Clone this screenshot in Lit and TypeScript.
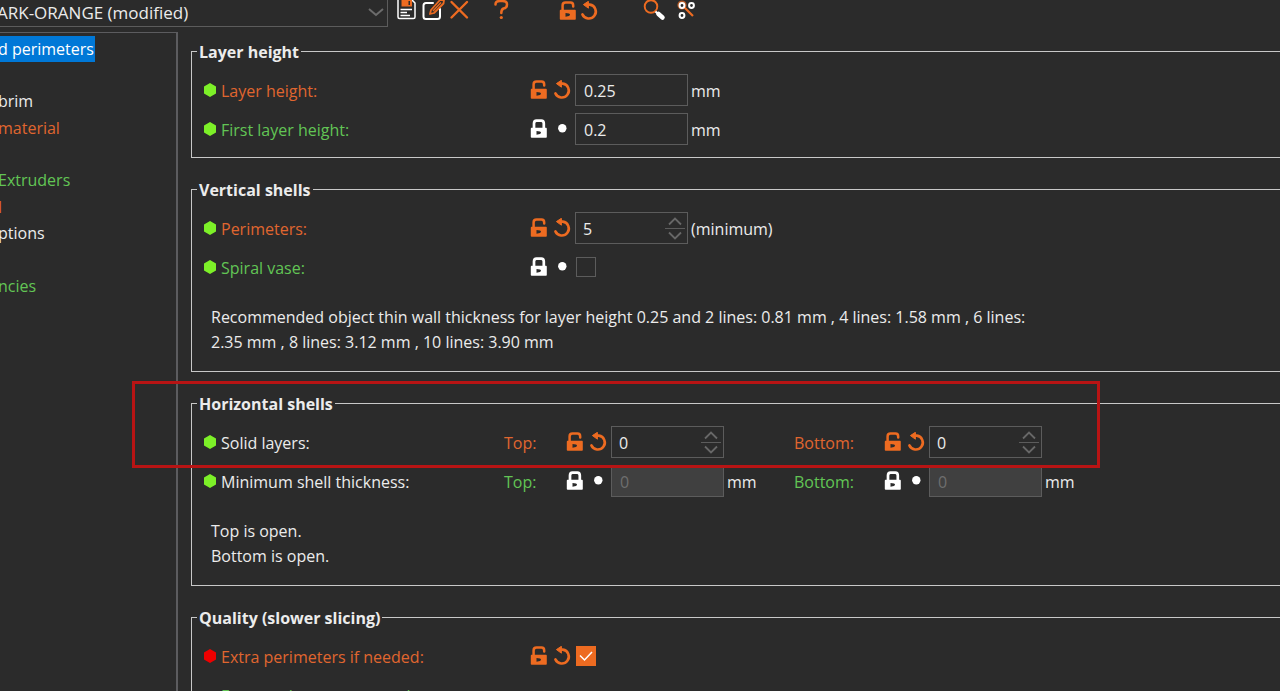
import { LitElement, html, css, nothing } from "lit";
import { customElement, property } from "lit/decorators.js";

type Tone = "plain" | "changed" | "system";

const shared = css`
  * {
    box-sizing: border-box;
  }
  svg {
    display: block;
    flex: none;
  }
  button {
    display: block;
    padding: 0;
    border: 0;
    background: none;
    color: inherit;
    cursor: pointer;
  }
  .plain {
    color: #ececec;
  }
  .changed {
    color: #e0662f;
  }
  .system {
    color: #62c555;
  }
`;

const unlocked = html`<svg width="20" height="20" viewBox="0 0 20 20">
  <path d="M4.600 10V4.500Q4.600 1.600 7.500 1.600H12.500Q15.200 1.600 15.200 4.500V5.500" fill="none" stroke="#ed6b21" stroke-width="2.500" stroke-linecap="round" />
  <path fill-rule="evenodd" fill="#ed6b21" d="M2.500 8.800H17Q17.800 8.800 17.800 9.700V18Q17.800 18.800 17 18.800H2.700Q1.800 18.800 1.800 18V9.700Q1.800 8.800 2.500 8.800ZM7.500 12L11 12.600Q13 13.800 11 15L7.500 15.700Z" />
</svg>`;

const locked = html`<svg width="20" height="20" viewBox="0 0 20 20">
  <path d="M5 10V4.500Q5 1.600 7.500 1.600H12.300Q14.800 1.600 14.800 4.500V10" fill="none" stroke="#fff" stroke-width="2.700" />
  <path fill-rule="evenodd" fill="#fff" d="M2.500 8.800H17Q17.800 8.800 17.800 9.700V18Q17.800 18.800 17 18.800H2.700Q1.800 18.800 1.800 18V9.700Q1.800 8.800 2.500 8.800ZM7.500 12L11 12.600Q13 13.800 11 15L7.500 15.700Z" />
</svg>`;

const undo = html`<svg width="20" height="20" viewBox="0 0 20 20">
  <path d="M7 3.600H9.800A7 7 0 1 1 2.400 13.400" fill="none" stroke="#ed6b21" stroke-width="2.600" stroke-linecap="round" />
  <path d="M3.400 3.600L8.400 0.300V7.200Z" fill="#ed6b21" stroke="#ed6b21" stroke-linejoin="round" />
</svg>`;

const dot = html`<svg width="20" height="20" viewBox="0 0 20 20"><circle cx="9.300" cy="9.300" r="4.200" fill="#fff" /></svg>`;

@customElement("option-field")
class OptionField extends LitElement {
  @property() kind: "text" | "spin" | "check" = "text";
  @property() value = "";
  @property() unit = "";
  @property() name = "";
  @property({ type: Boolean }) modified = false;
  @property({ type: Boolean }) disabled = false;
  @property({ type: Boolean }) checked = false;

  static styles = [
    shared,
    css`
      :host {
        display: flex;
        align-items: center;
        height: 32px;
      }
      .state {
        width: 24px;
      }
      .state:nth-of-type(2) {
        width: 22px;
      }
      .box {
        display: flex;
        align-items: center;
        width: 113px;
        height: 32px;
        border: 1px solid #5c5c5c;
      }
      .box.off {
        background: #404040;
      }
      input.entry {
        flex: 1;
        min-width: 0;
        height: 30px;
        padding: 2px 0 0 8px;
        border: 0;
        outline: 0;
        background: none;
        color: #ececec;
        font: inherit;
      }
      .spin input.entry {
        padding-left: 7px;
      }
      input.entry:disabled {
        color: #6e6e6e;
      }
      .arrows {
        width: 20px;
        margin-right: 2px;
      }
      .arrows button + button {
        border-top: 1px solid #5c5c5c;
      }
      .unit {
        padding: 2px 0 0 3px;
      }
      input.tick {
        appearance: none;
        width: 20px;
        height: 20px;
        margin: 0 0 0 1px;
        border: 1px solid #5c5c5c;
      }
      .tickwrap {
        display: grid;
      }
      .tickwrap > * {
        grid-area: 1 / 1;
      }
      .tickwrap svg {
        pointer-events: none;
        margin-left: 1px;
      }
      input.tick:checked {
        background: #ed6b21;
        border-color: #ed6b21;
      }
    `,
  ];

  private control() {
    if (this.kind === "check") {
      return html`<span class="tickwrap">
        <input class="tick" type="checkbox" aria-label=${this.name} ?checked=${this.checked} />
        ${this.checked
          ? html`<svg width="20" height="20" viewBox="0 0 20 20"><path d="M4 9.500L8.500 14L16 6" fill="none" stroke="#fff" stroke-width="1.500" /></svg>`
          : nothing}
      </span>`;
    }
    const spin = this.kind === "spin";
    return html`<span class="box ${spin ? "spin" : ""} ${this.disabled ? "off" : ""}">
      <input class="entry" type="text" inputmode="decimal" aria-label=${this.name} .value=${this.value} ?disabled=${this.disabled} />
      ${spin
        ? html`<span class="arrows">
            <button aria-label="Increase"><svg width="20" height="13" viewBox="0 0 20 13"><path d="M4 9.500L10 3.500L16 9.500" fill="none" stroke="#686868" stroke-width="1.800" /></svg></button>
            <button aria-label="Decrease"><svg width="20" height="13" viewBox="0 0 20 13"><path d="M4 3.500L10 9.500L16 3.500" fill="none" stroke="#686868" stroke-width="1.800" /></svg></button>
          </span>`
        : nothing}
    </span>`;
  }

  render() {
    return html`
      <button class="state" aria-label="System value">${this.modified ? unlocked : locked}</button>
      <button class="state" aria-label="Revert">${this.modified ? undo : dot}</button>
      ${this.control()} ${this.unit ? html`<span class="unit">${this.unit}</span>` : nothing}
    `;
  }
}

@customElement("option-row")
class OptionRow extends LitElement {
  @property() label = "";
  @property() tone: Tone = "plain";
  @property() mode: "simple" | "expert" | "unmarked" = "simple";

  static styles = [
    shared,
    css`
      :host {
        display: flex;
        align-items: center;
        height: 32px;
      }
      .label {
        display: flex;
        align-items: center;
        gap: 5px;
        width: 300px;
        flex: none;
        white-space: nowrap;
      }
      .label span {
        padding-top: 2px;
      }
      .fields {
        display: flex;
      }
    `,
  ];

  render() {
    const fill = { simple: "#7df028", expert: "#ee0000", unmarked: "none" }[this.mode];
    return html`
      <div class="label ${this.tone}">
        <svg width="12" height="14" viewBox="0 0 12 14"><path d="M6 0L12 3.500V10.500L6 14L0 10.500V3.500Z" fill=${fill} /></svg>
        <span>${this.label}</span>
      </div>
      <div class="fields"><slot></slot></div>
    `;
  }
}

@customElement("app-root")
class AppRoot extends LitElement {
  static styles = [
    shared,
    css`
      :host {
        display: flex;
        flex-direction: column;
        position: relative;
        height: 100vh;
        overflow: hidden;
        background: #2b2b2b;
        color: #ececec;
        font: 16px/24px "Open Sans", "Noto Sans", sans-serif;
      }
      .bar {
        display: flex;
        align-items: flex-start;
        height: 32px;
        flex: none;
      }
      .preset {
        display: flex;
        justify-content: space-between;
        align-items: center;
        width: 388px;
        height: 27px;
        border: solid #5c5c5c;
        border-width: 0 1px 1px 0;
      }
      .preset select {
        flex: 1;
        height: 26px;
        margin-left: -3px;
        padding: 0;
        border: 0;
        appearance: none;
        background: none;
        color: inherit;
        font: inherit;
        font-size: 17px;
      }
      .preset svg {
        margin-right: 2px;
      }
      .tools {
        display: flex;
        margin-left: 8px;
      }
      .tools button {
        width: 26px;
      }
      .tools .tight {
        width: 22px;
      }
      .tools .wide {
        width: 32px;
      }
      .tools .help {
        margin-left: 18px;
      }
      .tools .tight {
        margin-left: 40px;
      }
      .tools .wide {
        margin-left: 37px;
      }
      .body {
        display: flex;
        flex: 1;
        min-height: 0;
      }
      nav {
        display: flex;
        flex-direction: column;
        gap: 1px;
        width: 178px;
        flex: none;
        padding-top: 3px;
        border: solid #5c5c5f;
        border-width: 1px 2px 0 0;
      }
      ul {
        margin: 0 0 0 -2px;
        padding: 0;
        list-style: none;
      }
      li {
        height: 26px;
      }
      nav a {
        display: inline-block;
        line-height: 26px;
        padding-right: 1px;
        text-decoration: none;
      }
      nav a.current {
        background: #0078d7;
        color: #fff;
      }
      main {
        flex: 1;
        min-width: 0;
        padding: 7px 0 0 13px;
      }
      fieldset {
        display: flex;
        flex-direction: column;
        gap: 7px;
        min-width: 0;
        margin: 0 0 19px;
        padding: 10px 0 12px 12px;
        border: 1px solid #c8c8c8;
        border-right: 0;
      }
      legend {
        margin-left: -7px;
        padding: 1px 2px 0;
        font-weight: 700;
        line-height: 24px;
      }
      .solo {
        margin-left: 25px;
      }
      .sub {
        width: 61px;
        padding-top: 5px;
      }
      .sub.second {
        width: 89px;
      }
      .cell {
        width: 229px;
      }
      p {
        max-width: 850px;
        margin: 15px 0 4px 7px;
        line-height: 25px;
      }
      .mark {
        position: absolute;
        left: 132px;
        top: 381px;
        width: 968px;
        height: 87px;
        border: 3px solid #b81414;
        pointer-events: none;
      }
    `,
  ];

  private pages: [string, Tone][][] = [
    [["d perimeters", "plain"], ["", "plain"], ["brim", "plain"]],
    [["material", "changed"], ["", "plain"], ["Extruders", "system"]],
    [["l", "changed"], ["ptions", "plain"], ["", "plain"]],
    [["ncies", "system"]],
  ];

  render() {
    return html`
      <header class="bar">
        <div class="preset">
          <select aria-label="Preset"><option>ARK-ORANGE (modified)</option></select>
          <svg width="18" height="12" viewBox="0 0 18 12"><path d="M2 2L9 8L16 2" fill="none" stroke="#6c6c6c" stroke-width="2" /></svg>
        </div>
        <div class="tools">
          <button aria-label="Save preset"><svg width="22" height="22" viewBox="0 0 22 22">
            <path d="M2 0V17Q2 18.500 3.500 18.500H17.500Q19 18.500 19 17V3L16 0" fill="none" stroke="#fff" stroke-width="1.500" />
            <path d="M5.500 0H16V6.500H5.500Z" fill="#ed6b21" /><path d="M12.500 1H14V5H12.500Z" fill="#2b2b2b" />
            <path d="M4.500 9.500H16M4.500 12.500H11M4.500 15.500H14" stroke="#fff" stroke-width="1.300" />
          </svg></button>
          <button aria-label="Rename preset"><svg width="24" height="22" viewBox="0 0 24 22">
            <path d="M11 3H4Q1.500 3 1.500 5.500V16.500Q1.500 19 4 19H15.500Q18 19 18 16.500V9" fill="none" stroke="#fff" stroke-width="2" stroke-linecap="round" />
            <path d="M8 14L9 10L18 0H22L21.500 3.500L12 13Z" fill="none" stroke="#ed6b21" stroke-width="1.800" stroke-linejoin="round" /><path d="M11 11L19 2.500" stroke="#ed6b21" stroke-width="1.500" />
          </svg></button>
          <button aria-label="Delete preset"><svg width="22" height="22" viewBox="0 0 22 22"><path d="M3.500 2L19 17.500M19 2L3.500 17.500" stroke="#ed6b21" stroke-width="2.400" stroke-linecap="round" /></svg></button>
          <button class="help" aria-label="Help"><svg width="22" height="22" viewBox="0 0 22 22"><path d="M3.500 4.500Q3.500 1 8 1H10.500Q15 1 15 4.500T11.500 8.500Q9.300 9.500 9.300 13" fill="none" stroke="#ed6b21" stroke-width="2.500" stroke-linecap="round" /><circle cx="9.300" cy="17.500" r="1.600" fill="#ed6b21" /></svg></button>
          <button class="tight" aria-label="Unlock">${unlocked}</button>
          <button aria-label="Revert all">${undo}</button>
          <button class="wide" aria-label="Search"><svg width="24" height="22" viewBox="0 0 24 22"><circle cx="8" cy="6.500" r="6.300" fill="none" stroke="#ed6b21" stroke-width="1.900" /><path d="M12.500 11.500L15 14" stroke="#fff" stroke-width="2" /><path d="M15.500 14L19.500 17.500" stroke="#fff" stroke-width="4.500" stroke-linecap="round" /></svg></button>
          <button aria-label="Compare presets"><svg width="24" height="22" viewBox="0 0 24 22"><path d="M8 6L18 16" stroke="#ed6b21" stroke-width="2.200" /><circle cx="7" cy="5" r="4.600" fill="#ed6b21" opacity="0.700" />
            <g fill="#2b2b2b" stroke="#fff" stroke-width="2"><circle cx="7" cy="5.500" r="2.400" /><circle cx="16.500" cy="5.500" r="2.400" /><circle cx="7" cy="15.500" r="2.400" /></g></svg></button>
        </div>
      </header>
      <div class="body">
        <nav>
          ${this.pages.map(
            (group, g) => html`<ul>
              ${group.map(([text, tone], i) => html`<li>${text ? html`<a href="#" class="${tone} ${g + i === 0 ? "current" : ""}">${text}</a>` : nothing}</li>`)}
            </ul>`
          )}
        </nav>
        <main>
          <fieldset>
            <legend>Layer height</legend>
            <option-row label="Layer height:" tone="changed"><option-field class="solo" name="Layer height" modified value="0.25" unit="mm"></option-field></option-row>
            <option-row label="First layer height:" tone="system"><option-field class="solo" name="First layer height" value="0.2" unit="mm"></option-field></option-row>
          </fieldset>
          <fieldset>
            <legend>Vertical shells</legend>
            <option-row label="Perimeters:" tone="changed"><option-field class="solo" name="Perimeters" kind="spin" modified value="5" unit="(minimum)"></option-field></option-row>
            <option-row label="Spiral vase:" tone="system"><option-field class="solo" name="Spiral vase" kind="check"></option-field></option-row>
            <p>Recommended object thin wall thickness for layer height 0.25 and 2 lines: 0.81 mm , 4 lines: 1.58 mm , 6 lines:<br />2.35 mm , 8 lines: 3.12 mm , 10 lines: 3.90 mm</p>
          </fieldset>
          <fieldset>
            <legend>Horizontal shells</legend>
            <option-row label="Solid layers:">
              <span class="sub changed">Top:</span><option-field class="cell" name="Top solid layers" kind="spin" modified value="0"></option-field>
              <span class="sub second changed">Bottom:</span><option-field name="Bottom solid layers" kind="spin" modified value="0"></option-field>
            </option-row>
            <option-row label="Minimum shell thickness:">
              <span class="sub system">Top:</span><option-field class="cell" name="Top shell thickness" disabled value="0" unit="mm"></option-field>
              <span class="sub second system">Bottom:</span><option-field name="Bottom shell thickness" disabled value="0" unit="mm"></option-field>
            </option-row>
            <p>Top is open.<br />Bottom is open.</p>
          </fieldset>
          <fieldset>
            <legend>Quality (slower slicing)</legend>
            <option-row label="Extra perimeters if needed:" tone="changed" mode="expert"><option-field class="solo" name="Extra perimeters if needed" kind="check" modified checked></option-field></option-row>
            <option-row label="Extra perimeters on overhangs:" tone="system" mode="unmarked"></option-row>
          </fieldset>
        </main>
      </div>
      <div class="mark"></div>
    `;
  }
}
